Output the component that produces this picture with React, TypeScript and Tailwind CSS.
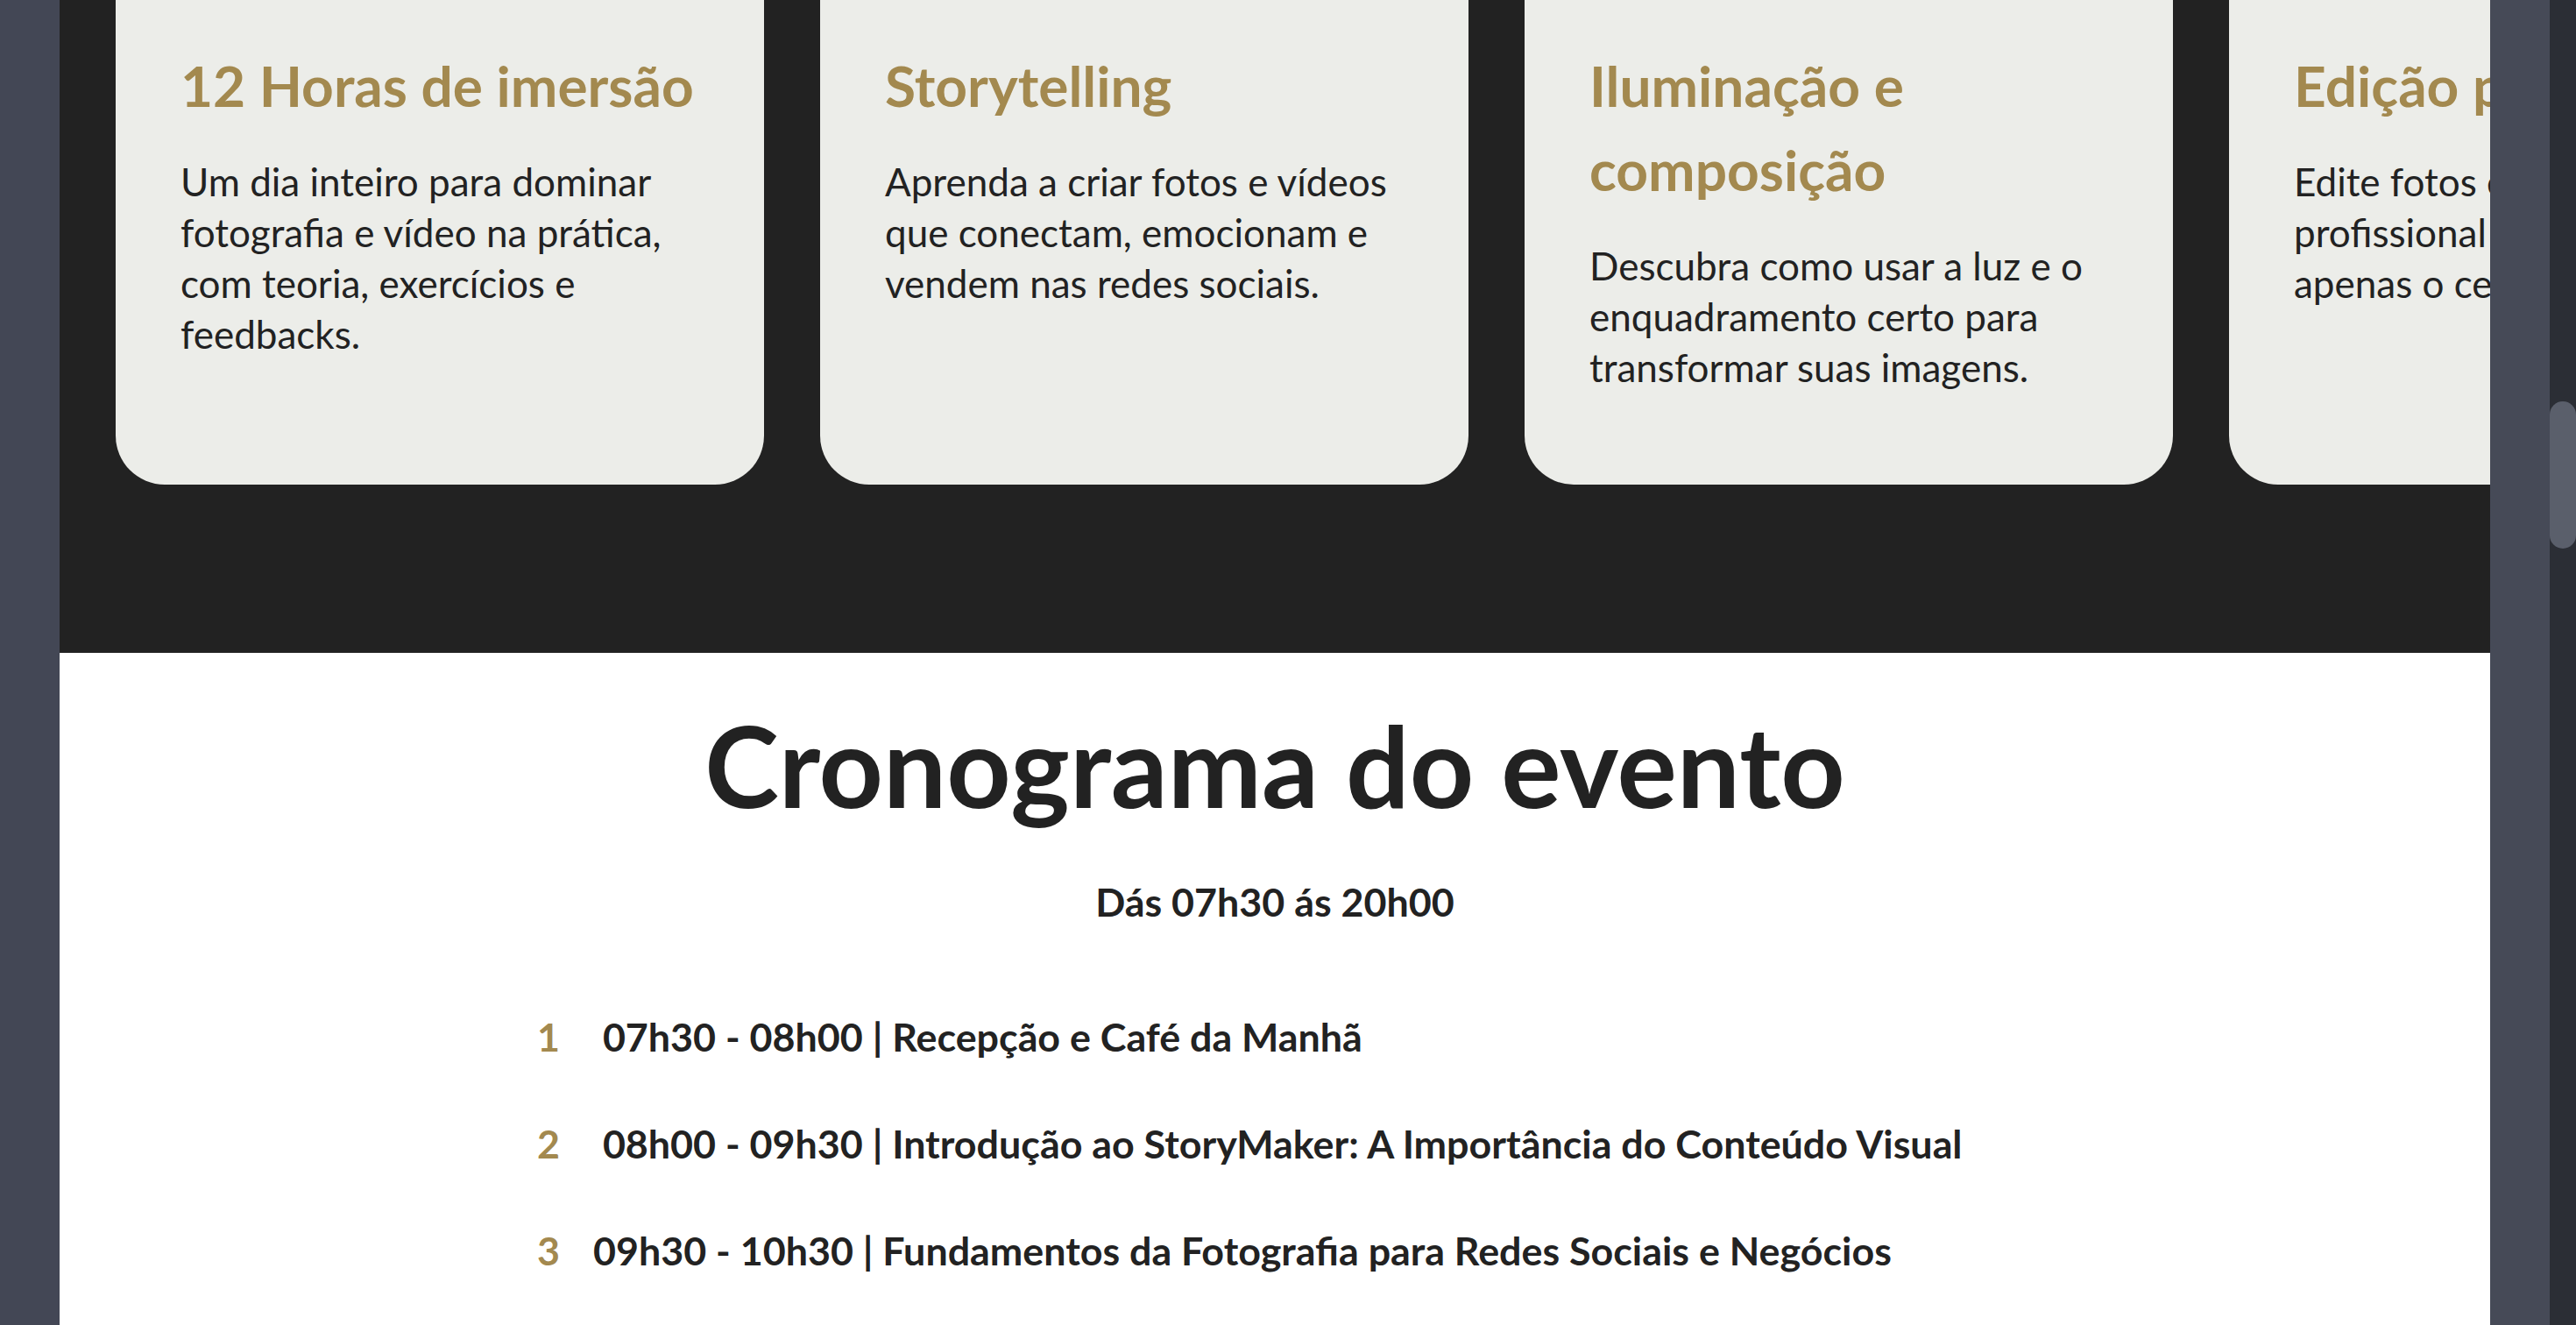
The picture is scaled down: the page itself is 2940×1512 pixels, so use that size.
import React from "react";

const cards = [
  {
    title: "12 Horas de imersão",
    body: "Um dia inteiro para dominar fotografia e vídeo na prática, com teoria, exercícios e feedbacks.",
  },
  {
    title: "Storytelling",
    body: "Aprenda a criar fotos e vídeos que conectam, emocionam e vendem nas redes sociais.",
  },
  {
    title: "Iluminação e composição",
    body: "Descubra como usar a luz e o enquadramento certo para transformar suas imagens.",
  },
  {
    title: "Edição prática",
    body: "Edite fotos e vídeos com nível profissional usando apenas o celular.",
  },
];

const schedule = [
  { n: "1", text: "\u00A007h30 - 08h00 | Recepção e Café da Manhã" },
  { n: "2", text: "\u00A008h00 - 09h30 | Introdução ao StoryMaker: A Importância do Conteúdo Visual" },
  { n: "3", text: "09h30 - 10h30 | Fundamentos da Fotografia para Redes Sociais e Negócios" },
];

export default function App() {
  return (
    <div className="flex h-[1512px] w-[2940px] overflow-hidden bg-[#444856] font-[Lato,sans-serif]">
      <div className="w-[68px] shrink-0 bg-[#434755]" />
      <main className="flex w-[2774px] shrink-0 flex-col overflow-hidden bg-white">
        <section className="shrink-0 overflow-hidden bg-[#222222] pb-[192px]">
          <div className="flex gap-[64px] pl-[64px]">
            {cards.map((c) => (
              <div
                key={c.title}
                className="w-[740px] shrink-0 rounded-b-[56px] bg-[#ecede9] pb-[105px] pl-[74px] pr-[56px] pt-[50px]"
              >
                <h3 className="mb-[32px] text-[64px] font-bold leading-[1.5] text-[#a3894f]">{c.title}</h3>
                <p className="text-[44px] leading-[58px] text-[#222222]">
                  {c.title === "Edição prática" ? (
                    <>
                      Edite fotos e vídeos com
                      <br />
                      profissional usando
                      <br />
                      apenas o celular.
                    </>
                  ) : (
                    c.body
                  )}
                </p>
              </div>
            ))}
          </div>
        </section>
        <section className="flex flex-col items-center pt-[51px] text-[#222222]">
          <h2 className="text-[128px] font-bold leading-[1.2]">Cronograma do evento</h2>
          <p className="mt-[46px] text-[44.8px] font-bold leading-[1.5]">Dás 07h30 ás 20h00</p>
          <ol className="mt-[87px] flex w-[1684px] flex-col gap-[55px]">
            {schedule.map((s) => (
              <li key={s.n} className="flex text-[44.8px] font-bold leading-[1.5]">
                <span className="w-[64px] shrink-0 text-[#a3894f]">{s.n}</span>
                <span className="whitespace-pre">{s.text}</span>
              </li>
            ))}
          </ol>
        </section>
      </main>
      <div className="w-[68px] shrink-0 bg-[#464a57]" />
      <div className="flex w-[30px] shrink-0 flex-col bg-[#2b2e35] pt-[458px]">
        <div className="h-[168px] w-[30px] rounded-full bg-[#5a5f6b]" />
      </div>
    </div>
  );
}
